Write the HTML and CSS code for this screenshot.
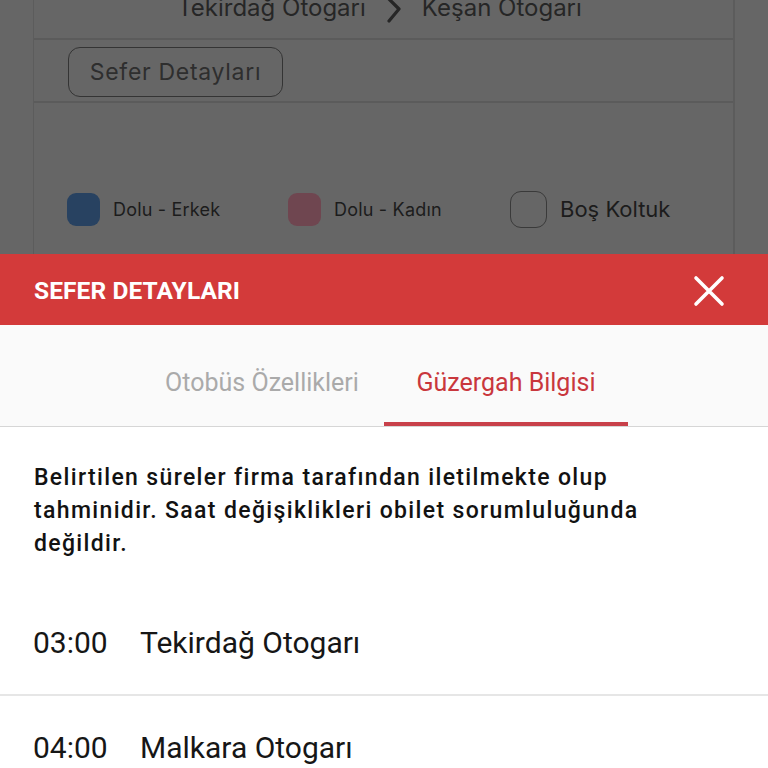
FILE: index.html
```html
<!DOCTYPE html>
<html lang="tr">
<head>
<meta charset="utf-8">
<title>Sefer Detayları</title>
<link rel="stylesheet" href="styles.css">
</head>
<body>
<div class="screen">
  <section class="backdrop">
    <div class="card">
      <div class="route">
        <span class="route-text">Tekirdağ Otogarı</span>
        <svg class="chev" width="20" height="26" viewBox="0 0 20 26"><path d="M5 2 L15 12 L5 24" fill="none" stroke="#262626" stroke-width="3.2" stroke-linecap="round" stroke-linejoin="round"/></svg>
        <span class="route-text">Keşan Otogarı</span>
      </div>
      <div class="actions">
        <button class="details-btn">Sefer Detayları</button>
      </div>
      <div class="legend">
        <div class="legend-item"><span class="seat seat-male"></span><span class="legend-label">Dolu - Erkek</span></div>
        <div class="legend-item"><span class="seat seat-female"></span><span class="legend-label">Dolu - Kadın</span></div>
        <div class="legend-item"><span class="seat seat-empty"></span><span class="legend-label legend-label-lg">Boş Koltuk</span></div>
      </div>
    </div>
  </section>
  <section class="sheet">
    <header class="sheet-header">
      <h1 class="sheet-title">SEFER DETAYLARI</h1>
      <svg class="close" width="32" height="32" viewBox="0 0 32 32"><path d="M3 3 L29 29 M29 3 L3 29" stroke="#fff" stroke-width="3.6" stroke-linecap="round"/></svg>
    </header>
    <nav class="tabs">
      <div class="tab">Otobüs Özellikleri</div>
      <div class="tab tab-active">Güzergah Bilgisi</div>
    </nav>
    <div class="sheet-body">
      <p class="note">Belirtilen süreler firma tarafından iletilmekte olup tahminidir. Saat değişiklikleri obilet sorumluluğunda değildir.</p>
      <ul class="stops">
        <li class="stop"><span class="stop-time">03:00</span><span class="stop-name">Tekirdağ Otogarı</span></li>
        <li class="stop"><span class="stop-time">04:00</span><span class="stop-name">Malkara Otogarı</span></li>
      </ul>
    </div>
  </section>
</div>
</body>
</html>
```

FILE: styles.css
```css
* { box-sizing: border-box; }
html, body { margin: 0; padding: 0; }
body { width: 768px; height: 768px; overflow: hidden; background: #fff; }
.screen { display: flex; flex-direction: column; height: 768px; overflow: hidden; }

.backdrop { height: 254px; flex: none; background: #666666; padding: 0 33px; overflow: hidden; font-family: Inter, "Noto Sans", sans-serif; }
.card { height: 100%; border-left: 1px solid #5c5c5c; border-right: 2px solid #5c5c5c; }
.route { height: 40px; border-bottom: 2px solid #5b5b5b; display: flex; justify-content: center; align-items: flex-start; gap: 18px; padding-right: 8px; }
.route-text { font-size: 24px; line-height: 24px; margin-top: -4px; color: #262626; }
.chev { margin-top: -3px; }
.actions { height: 63px; border-bottom: 2px solid #5b5b5b; padding: 7px 0 0 34px; }
.details-btn { width: 215px; height: 50px; border: 1.5px solid #343434; border-radius: 12px; background: transparent; font-family: Inter, sans-serif; font-size: 23px; letter-spacing: 0.7px; color: #2e2e2e; padding: 0; }
.legend { display: grid; grid-template-columns: 221px 222px 221px; padding: 87px 0 0 33px; }
.legend-item { display: flex; align-items: center; height: 38px; }
.seat { width: 33px; height: 33px; border-radius: 9px; flex: none; }
.seat-male { background: #284261; }
.seat-female { background: #6f4650; }
.seat-empty { width: 37px; height: 37px; border: 1.5px solid #3a3a3a; border-radius: 11px; }
.legend-label { margin-left: 13px; font-size: 18px; letter-spacing: 0.2px; color: #1c1c1c; }
.legend-label-lg { font-size: 22px; letter-spacing: 0; margin-left: 13px; }

.sheet { flex: 1; display: flex; flex-direction: column; font-family: Roboto, "Liberation Sans", sans-serif; }
.sheet-header { height: 71px; flex: none; background: #d33a3a; display: flex; align-items: center; justify-content: space-between; padding: 2px 43px 0 34px; }
.sheet-title { margin: 0; font-size: 24.5px; font-weight: 700; color: #fff; letter-spacing: 0.1px; }
.tabs { height: 102px; flex: none; background: #fafafa; border-bottom: 1px solid #d6d6d6; display: flex; justify-content: center; }
.tab { width: 244px; height: 101px; padding-top: 44px; text-align: center; font-size: 25px; line-height: 28px; color: #aaaaaa; }
.tab-active { color: #c9373d; border-bottom: 4px solid #c8404a; }
.sheet-body { background: #fff; padding-top: 34px; }
.note { margin: 0; padding: 0 70px 0 34px; font-size: 23px; font-weight: 500; letter-spacing: 1.35px; line-height: 33px; color: #121212; }
.stops { list-style: none; margin: 31px 0 0; padding: 0; }
.stop { height: 105px; border-bottom: 2px solid #e6e6e6; display: flex; align-items: center; padding: 0 0 0 33px; font-size: 30px; color: #161616; }
.stop-time { width: 107px; flex: none; }
```
